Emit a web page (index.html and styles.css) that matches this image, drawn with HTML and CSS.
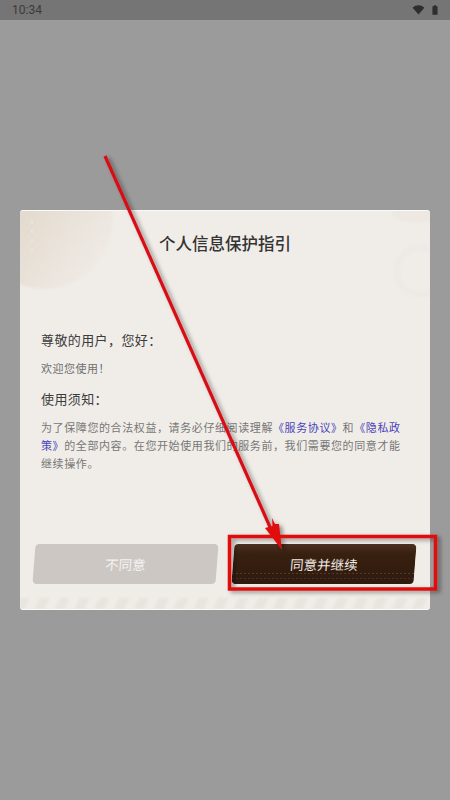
FILE: index.html
```html
<!DOCTYPE html>
<html lang="zh">
<head>
<meta charset="utf-8">
<title>个人信息保护指引</title>
<link rel="stylesheet" href="styles.css">
</head>
<body>
<div class="status">
  <span class="time">10:34</span>
  <span class="status-icons">
    <svg class="wifi" viewBox="0 0 14 11"><path d="M0.5 3 C4 -0.6 10 -0.6 13.5 3 L7 10.5 Z"/></svg>
    <svg class="batt" viewBox="0 0 7 11"><path d="M2.2 0h2.6v1H6.5v10h-6V1h1.7z"/></svg>
  </span>
</div>
<main class="stage">
  <section class="card">
    <div class="blob"></div>
    <div class="dots"></div>
    <div class="corner"></div>
    <div class="ring"></div>
    <h1 class="title">个人信息保护指引</h1>
    <div class="body">
      <h2 class="head">尊敬的用户，您好：</h2>
      <p class="welcome">欢迎您使用！</p>
      <h2 class="head notice">使用须知：</h2>
      <p class="para">为了保障您的合法权益，请务必仔细阅读理解<a class="lnk">《服务协议》</a>和<a class="lnk">《隐私政策》</a>的全部内容。在您开始使用我们的服务前，我们需要您的同意才能继续操作。</p>
    </div>
    <div class="actions">
      <button class="btn no">不同意</button>
      <button class="btn yes">同意并继续</button>
    </div>
    <div class="stripes"></div>
  </section>
</main>
<svg class="overlay" viewBox="0 0 450 800">
  <defs>
    <filter id="sh" x="-20%" y="-20%" width="140%" height="140%"><feDropShadow dx="3" dy="2" stdDeviation="2" flood-color="#000" flood-opacity=".4"/></filter>
  </defs>
  <g filter="url(#sh)">
    <path d="M105 156 L274 536" stroke="#d80e14" stroke-width="3.2" fill="none"/>
    <path d="M282 550 L265 528 L272.5 526 L272 518 L275 524 L279 524 Z" fill="#e00a10"/>
    <rect x="229.5" y="536.5" width="206" height="52.5" fill="none" stroke="#e00a10" stroke-width="3.5"/>
  </g>
</svg>
</body>
</html>
```
FILE: styles.css
```css
* { box-sizing: border-box; }
html, body { margin: 0; height: 800px; overflow: hidden; }
body { background: #9b9b9b; font-family: "Noto Sans CJK SC", "Liberation Sans", sans-serif; position: relative; }
.status { height: 20px; background: #757575; display: flex; align-items: center; justify-content: space-between; padding: 0 12px; color: #3a3a3a; font: 12px/20px Roboto, sans-serif; }
.status-icons { display: flex; align-items: center; gap: 7px; }
.wifi { width: 13px; height: 10px; fill: #2e2e2e; }
.batt { width: 6px; height: 10px; fill: #2e2e2e; }
.stage { padding: 190px 20px 0; }
.card { position: relative; height: 400px; width: 410px; background: #f0ede8; border-radius: 3px; overflow: hidden; display: flex; flex-direction: column; border-top: 1px solid #fbfaf8; border-bottom: 1px solid #fbfaf8; }
.blob { position: absolute; left: -43px; top: -58px; width: 136px; height: 136px; border-radius: 50%; filter: blur(1px); background: linear-gradient(125deg, #e2d8ca 30%, #e9e2d9 60%, #f0ece7 92%); }
.dots { position: absolute; left: 10px; top: 7px; width: 4px; height: 32px; background: radial-gradient(circle, #ece6dd 1px, transparent 1.5px) 0 0 / 4px 9px; }
.corner { position: absolute; right: -12px; top: -6px; width: 50px; height: 18px; border-radius: 50%; background: #ede8e2; filter: blur(1px); }
.ring { position: absolute; right: -18px; top: 33px; width: 55px; height: 54px; border: 7px solid #edeae6; border-radius: 50%; filter: blur(.8px); }
.title { position: relative; margin: 20px 0 0; text-align: center; font-size: 16.5px; line-height: 24px; font-weight: 500; color: #333; }
.body { position: relative; padding: 0 21px; margin-top: 75px; flex: 1; }
.head { margin: 0; font-size: 13px; line-height: 20px; font-weight: 400; color: #3c3c3c; letter-spacing: .4px; }
.welcome { margin: 10px 0 0; font-size: 11px; line-height: 16px; color: #6f6f6f; letter-spacing: .5px; }
.notice { margin-top: 13px; }
.para { margin: 9px 0 0; font-size: 11px; line-height: 18px; color: #777; letter-spacing: .6px; }
.lnk { color: #4a43b8; }
.actions { position: relative; display: flex; justify-content: space-between; padding: 0 15px 0 14px; margin-bottom: 25px; }
.btn { border: 0; height: 40px; font: 400 13.5px "Noto Sans CJK SC", sans-serif; transform: skewX(-4.5deg); border-radius: 4px; padding: 0; }
.no { width: 183px; background: #cdc7c4; color: #f4f2f0; }
.yes { width: 182px; background-color: #38200f; background-image: repeating-linear-gradient(90deg, rgba(255,255,255,.14) 0 2px, transparent 2px 4px), repeating-linear-gradient(90deg, rgba(255,255,255,.1) 0 2px, transparent 2px 4px), linear-gradient(#4a3022, #38200f 25%, #2f1a0e); background-size: 100% 1px, 100% 1px, 100% 100%; background-repeat: no-repeat; background-position: 0 29px, 0 34px, 0 0; color: #eee9e2; }
.stripes { position: absolute; left: 0; right: 0; bottom: 0; height: 11px; filter: blur(.8px); background: repeating-linear-gradient(115deg, #e8e5df 0 9px, #f0ede8 9px 18px); }
.overlay { position: absolute; left: 0; top: 0; width: 450px; height: 800px; pointer-events: none; }
```
